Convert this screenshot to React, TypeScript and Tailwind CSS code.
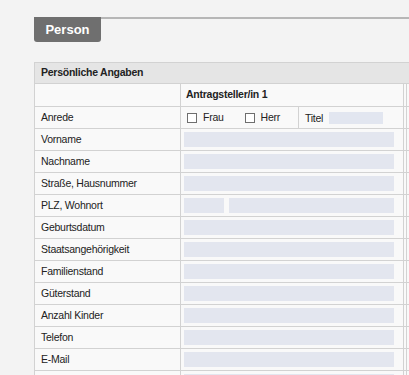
import React from "react";

const labels = [
  "Vorname",
  "Nachname",
  "Straße, Hausnummer",
  "PLZ, Wohnort",
  "Geburtsdatum",
  "Staatsangehörigkeit",
  "Familienstand",
  "Güterstand",
  "Anzahl Kinder",
  "Telefon",
  "E-Mail",
  "",
];

function Checkbox() {
  return <span className="inline-block w-[10px] h-[10px] border border-[#6e6e6e] bg-white" />;
}

export default function App() {
  return (
    <div
      className="w-[409px] h-[375px] overflow-hidden bg-[#f3f3f3] text-[#222]"
      style={{ fontFamily: '"Liberation Sans", Arial, sans-serif' }}
    >
      <div className="pt-[17px] flex">
        <div className="ml-[34px] w-[67px] h-[25px] bg-[#6f6f6f] rounded-b-[3px] flex items-center justify-center text-white font-bold text-[13px]">
          Person
        </div>
        <div className="flex-1 border-t-2 border-[#b6b6b6]" />
      </div>

      <div className="ml-[34px] mt-[20px] w-[390px] border-t border-l border-[#d2d2d2] text-[10.5px] tracking-[-0.25px]">
        <div className="h-[21px] bg-[#e5e5e5] border-b border-[#d2d2d2] flex items-center pl-[6px] font-bold">
          Persönliche Angaben
        </div>

        <div className="h-[23px] flex border-b border-[#d2d2d2] bg-[#f9f9f9]">
          <div className="w-[146px] border-r border-[#d2d2d2]" />
          <div className="w-[223px] border-r border-[#d2d2d2] flex items-center pl-[5px] font-bold">
            Antragsteller/in 1
          </div>
          <div className="flex-1 ml-[2px] border-l border-[#d2d2d2]" />
        </div>

        <div className="h-[22px] flex border-b border-[#d2d2d2] bg-[#f9f9f9]">
          <div className="w-[146px] border-r border-[#d2d2d2] flex items-center pl-[6px]">Anrede</div>
          <div className="w-[223px] border-r border-[#d2d2d2] flex">
            <div className="w-[118px] border-r border-[#d2d2d2] flex items-center pl-[6px]">
              <Checkbox />
              <span className="ml-[6px]">Frau</span>
              <span className="ml-[21px] flex items-center">
                <Checkbox />
                <span className="ml-[6px]">Herr</span>
              </span>
            </div>
            <div className="flex items-center pl-[6px]">
              <span className="pt-[2px]">Titel</span>
              <span className="ml-[6px] w-[54px] h-[12px] bg-[#e2e6f0]" />
            </div>
          </div>
          <div className="flex-1 ml-[2px] border-l border-[#d2d2d2]" />
        </div>

        {labels.map((label, i) => (
          <div key={i} className="h-[22px] flex border-b border-[#d2d2d2] bg-[#f9f9f9]">
            <div className="w-[146px] border-r border-[#d2d2d2] flex items-center pl-[6px]">{label}</div>
            <div className="w-[223px] border-r border-[#d2d2d2] flex items-center pl-[3px] pr-[9px]">
              {label === "PLZ, Wohnort" ? (
                <>
                  <span className="w-[40px] h-[15px] bg-[#e3e6ef]" />
                  <span className="ml-[5px] flex-1 h-[15px] bg-[#e3e6ef]" />
                </>
              ) : (
                <span className="flex-1 h-[15px] bg-[#e3e6ef]" />
              )}
            </div>
            <div className="flex-1 ml-[2px] border-l border-[#d2d2d2]" />
          </div>
        ))}
      </div>
    </div>
  );
}
